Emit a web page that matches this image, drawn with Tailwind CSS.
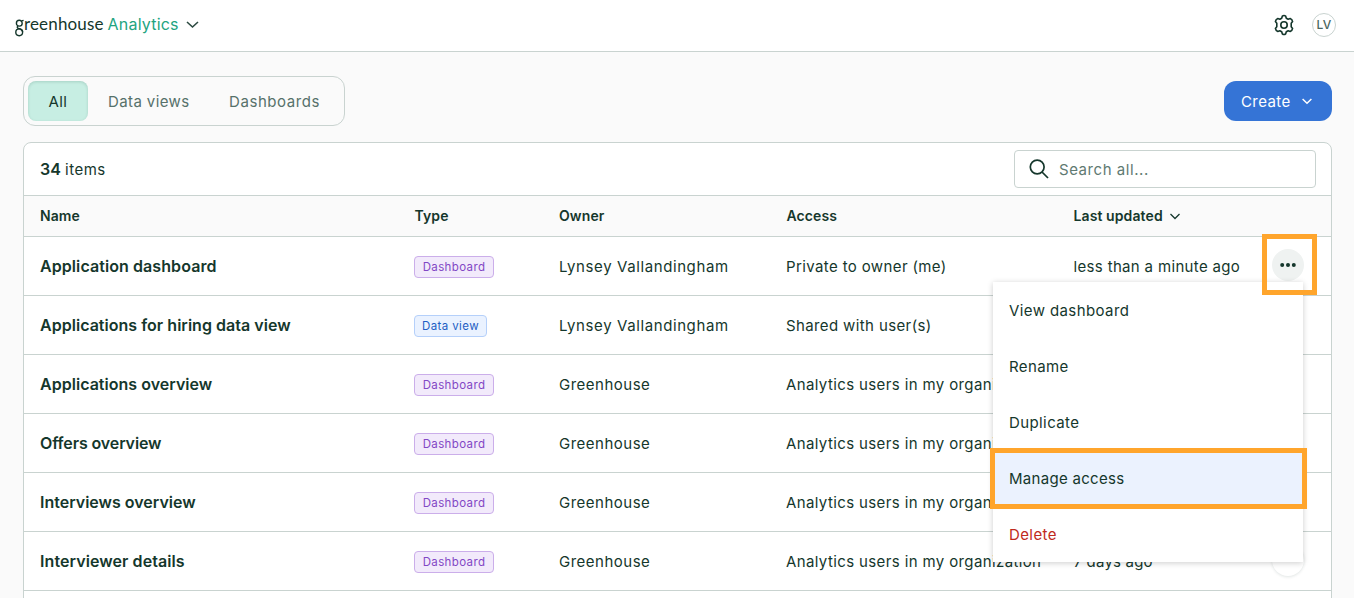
<!DOCTYPE html>
<html lang="en">
<head>
<meta charset="utf-8">
<title>Greenhouse Analytics</title>
<script src="https://cdn.jsdelivr.net/npm/@tailwindcss/browser@4"></script>
</head>
<body class="relative h-[598px] w-[1354px] overflow-hidden bg-[#fafafa] font-['Inter',sans-serif] text-[#15372c]">
  <header class="flex h-[52px] items-center justify-between border-b border-[#c9d3d0] bg-white pl-[15px] pr-[18px]">
    <div class="flex items-center pb-[4px] leading-6">
      <svg class="mt-[9px] h-[20px] w-[9px]" viewBox="0 0 9 20" fill="none" stroke="#15372c" stroke-width="1.4"><circle cx="4.3" cy="5.2" r="2.900"/><path d="M6.300 3 8.600 2.400M3 8c-1.200.9-1 2 .6 2.500 2 .5 4 1.300 4 3.600"/><circle cx="4.200" cy="14.300" r="3.400"/></svg>
      <span class="font-['Lato',sans-serif] text-[17px] tracking-[0.15px]">reenhouse</span>
      <span class="ml-[4px] text-base tracking-[0.2px] text-[#23a47f]">Analytics</span>
      <svg class="ml-[7px] mt-[2px] h-[8px] w-[13px]" viewBox="0 0 13 8" fill="none" stroke="#2c4a41" stroke-width="1.6"><path d="M1 1l5.500 5L12 1"/></svg>
    </div>
    <div class="flex items-center gap-[17px] pb-px">
      <svg class="h-[22px] w-[22px]" viewBox="0 0 22 22" fill="none" stroke="#15372c" stroke-width="1.600" stroke-linejoin="round"><path d="M9.300 2.200Q11 .8 12.700 2.200L13.300 4.200 15.200 5.200 17.200 4.600Q19.300 5.400 19.600 7.600L18.200 9.300V12.700L19.600 14.400Q19.300 16.600 17.200 17.400L15.200 16.800 13.300 17.800 12.700 19.800Q11 21.200 9.300 19.800L8.700 17.800 6.800 16.800 4.800 17.400Q2.700 16.600 2.400 14.400L3.800 12.700V9.300L2.400 7.600Q2.700 5.400 4.800 4.600L6.800 5.200 8.700 4.200Z"/><circle cx="11" cy="11" r="3.200"/></svg>
      <div class="flex h-6 w-6 items-center justify-center rounded-full border border-[#c9d3d0] text-xs font-medium tracking-[0.3px] text-[#4b675e]">LV</div>
    </div>
  </header>

  <main class="px-[23px] pr-[22px] pt-6">
    <div class="flex h-[50px] items-center justify-between">
      <nav class="flex h-[50px] w-[322px] rounded-xl border border-[#c9d3d0] p-[4px] text-[15px] leading-[42px] text-[#56716a]">
        <span class="h-10 w-[60px] rounded-lg bg-[#c7eee3] text-center tracking-[0.4px] text-[#15372c] shadow-[inset_0_1px_3px_rgba(21,80,60,0.18)]">All</span>
        <span class="ml-[20px] w-[121px] tracking-[0.4px]">Data views</span>
        <span class="tracking-[0.580px]">Dashboards</span>
      </nav>
      <button class="flex h-10 w-[108px] items-center rounded-xl bg-[#3574d6] pl-[17px] text-[15px] tracking-[0.4px] text-white"><span class="pt-[2px]">Create</span>
        <svg class="ml-[11px] h-[7px] w-[10px]" viewBox="0 0 10 7" fill="none" stroke="#fff" stroke-width="1.500"><path d="M.6 1 5 5.300 9.400 1"/></svg>
      </button>
    </div>

    <section class="mt-4 h-[470px] rounded-t-lg border border-[#c9d3d0] bg-white text-[15px]">
      <div class="flex h-[53px] items-center justify-between border-b border-[#c9d3d0] pl-4 pr-[15px]">
        <p><b class="text-base font-semibold">34</b> <span class="tracking-[0.5px]">items</span></p>
        <div class="flex h-[38px] w-[302px] items-center rounded border border-[#c9d3d0] pl-[14px] text-[#5f7a72]">
          <svg class="mr-[10px] h-5 w-5" viewBox="0 0 20 20" fill="none" stroke="#15372c" stroke-width="1.700"><circle cx="8.200" cy="8" r="6.900"/><path d="M13 13l6 6"/></svg>
          <span class="pt-[2px] tracking-[0.550px]">Search all...</span>
        </div>
      </div>
      <div class="grid h-[41px] grid-cols-[374.500px_144.500px_227.500px_287px_1fr] items-center border-b border-[#c9d3d0] bg-[#fafafa] pl-4 text-sm font-semibold tracking-[0.1px]">
        <span>Name</span><span>Type</span><span>Owner</span><span>Access</span>
        <span class="flex items-center">Last updated<svg class="ml-[7px] h-[7px] w-[10px]" viewBox="0 0 10 7" fill="none" stroke="#15372c" stroke-width="1.300"><path d="M.5 1 5 5.500 9.500 1"/></svg></span>
      </div>

      <div class="grid h-[59px] grid-cols-[374px_145px_227px_287.500px_1fr] items-center border-b border-[#c9d3d0] pl-4 tracking-[0.380px]">
        <span class="text-base font-semibold tracking-[0.080px]">Application dashboard</span>
        <span class="mt-[2px] flex h-[22px] w-[80px] items-center justify-center rounded border border-[#cbaeea] bg-[#f2eafb] pt-px text-[11.500px] text-[#8247c5]">Dashboard</span>
        <span class="pt-[2px] tracking-[0.600px]">Lynsey Vallandingham</span><span class="pt-[2px]">Private to owner (me)</span>
        <span class="flex items-center justify-between pr-[27px]"><span class="pt-[2px] tracking-[0.340px]">less than a minute ago</span>
          <svg class="-mt-[2px] h-8 w-8 rounded-full bg-[#eff2f1]" viewBox="0 0 32 32" fill="#15372c"><circle cx="10.200" cy="16" r="2"/><circle cx="16" cy="16" r="2"/><circle cx="21.800" cy="16" r="2"/></svg></span>
      </div>
      <div class="grid h-[59px] grid-cols-[374px_145px_227px_287.500px_1fr] items-center border-b border-[#c9d3d0] pl-4 tracking-[0.380px]">
        <span class="text-base font-semibold tracking-[0.030px]">Applications for hiring data view</span>
        <span class="mt-[2px] flex h-[22px] w-[73px] items-center justify-center rounded border border-[#b5d0fa] bg-[#eaf2ff] pt-px text-[11.500px] text-[#1f5fc4]">Data view</span>
        <span class="pt-[2px] tracking-[0.600px]">Lynsey Vallandingham</span><span class="pt-[2px]">Shared with user(s)</span>
      </div>
      <div class="grid h-[59px] grid-cols-[374px_145px_227px_287.500px_1fr] items-center border-b border-[#c9d3d0] pl-4 tracking-[0.380px]">
        <span class="text-base font-semibold tracking-[0.030px]">Applications overview</span>
        <span class="mt-[2px] flex h-[22px] w-[80px] items-center justify-center rounded border border-[#cbaeea] bg-[#f2eafb] pt-px text-[11.500px] text-[#8247c5]">Dashboard</span>
        <span class="pt-[2px] tracking-[0.500px]">Greenhouse</span><span class="pt-[2px]">Analytics users in my organization</span>
      </div>
      <div class="grid h-[59px] grid-cols-[374px_145px_227px_287.500px_1fr] items-center border-b border-[#c9d3d0] pl-4 tracking-[0.380px]">
        <span class="text-base font-semibold tracking-[-0.120px]">Offers overview</span>
        <span class="mt-[2px] flex h-[22px] w-[80px] items-center justify-center rounded border border-[#cbaeea] bg-[#f2eafb] pt-px text-[11.500px] text-[#8247c5]">Dashboard</span>
        <span class="pt-[2px] tracking-[0.500px]">Greenhouse</span><span class="pt-[2px]">Analytics users in my organization</span>
      </div>
      <div class="grid h-[59px] grid-cols-[374px_145px_227px_287.500px_1fr] items-center border-b border-[#c9d3d0] pl-4 tracking-[0.380px]">
        <span class="text-base font-semibold tracking-[0px]">Interviews overview</span>
        <span class="mt-[2px] flex h-[22px] w-[80px] items-center justify-center rounded border border-[#cbaeea] bg-[#f2eafb] pt-px text-[11.500px] text-[#8247c5]">Dashboard</span>
        <span class="pt-[2px] tracking-[0.500px]">Greenhouse</span><span class="pt-[2px]">Analytics users in my organization</span>
      </div>
      <div class="grid h-[59px] grid-cols-[374px_145px_227px_287.500px_1fr] items-center border-b border-[#c9d3d0] pl-4 tracking-[0.380px]">
        <span class="text-base font-semibold tracking-[0.080px]">Interviewer details</span>
        <span class="mt-[2px] flex h-[22px] w-[80px] items-center justify-center rounded border border-[#cbaeea] bg-[#f2eafb] pt-px text-[11.500px] text-[#8247c5]">Dashboard</span>
        <span class="pt-[2px] tracking-[0.500px]">Greenhouse</span><span class="pt-[2px]">Analytics users in my organization</span>
        <span class="flex items-center justify-between pr-[27px]"><span class="pt-[2px] tracking-[0.200px]">7 days ago</span><i class="-mt-[2px] h-8 w-8 rounded-full bg-white shadow-[0_1px_3px_rgba(21,55,44,0.13)]"></i></span>
      </div>
    </section>
  </main>

  <div class="absolute left-[993px] top-[282px] h-[280px] w-[310px] bg-white text-[15px] leading-[58px] tracking-[0.400px] shadow-[0_1px_6px_rgba(0,0,0,0.2)]">
    <div class="h-14 pl-4">View dashboard</div>
    <div class="h-14 pl-4">Rename</div>
    <div class="h-14 pl-4">Duplicate</div>
    <div class="h-14 bg-[#ebf2fe] pl-4 tracking-[0.300px]">Manage access</div>
    <div class="h-14 pl-4 text-[#bf2a20]">Delete</div>
  </div>
  <div class="absolute left-[1262px] top-[234px] h-[61px] w-[55px] border-[5px] border-[#ffa52c]"></div>
  <div class="absolute left-[990px] top-[448px] h-[61px] w-[317px] border-[5px] border-[#ffa52c]"></div>
</body>
</html>
